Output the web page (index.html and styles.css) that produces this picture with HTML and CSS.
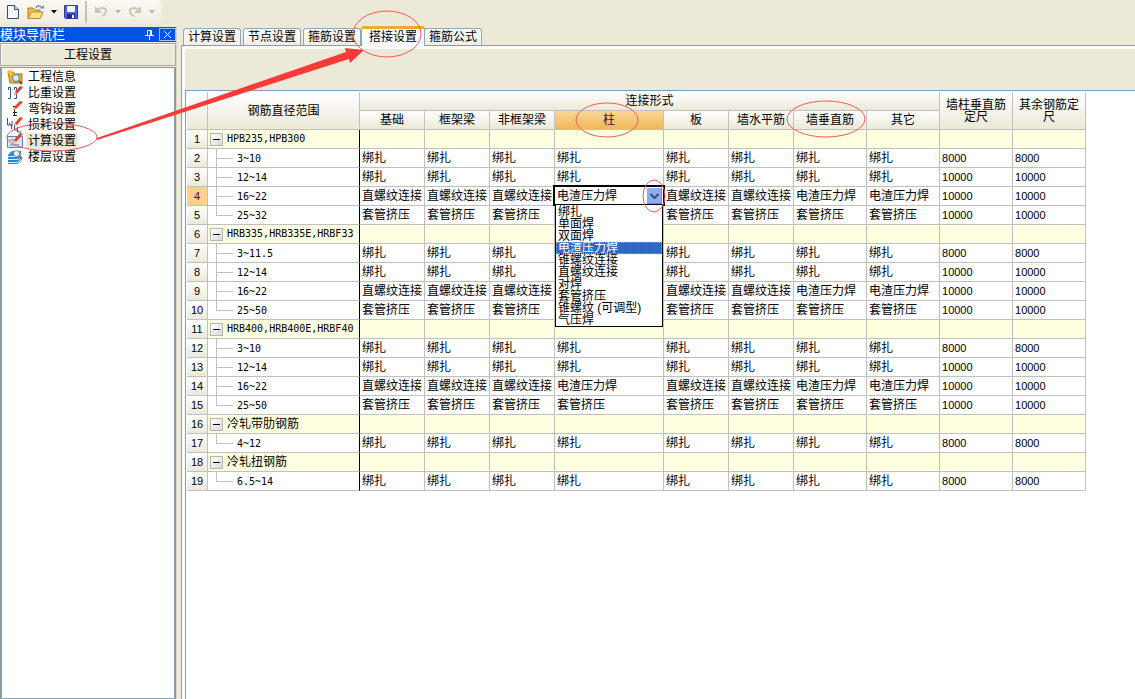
FILE: index.html
```html
<!DOCTYPE html>
<html lang="zh-CN">
<head>
<meta charset="utf-8">
<title>工程设置</title>
<link rel="stylesheet" href="styles.css">
</head>
<body>
<header class="toolbar">
  <div class="tools">
    <button class="tool" aria-label="新建"><svg width="16" height="16" viewBox="0 0 16 16"><path d="M2.500 1.500h7l4 4v9h-11z" fill="#f4f9ff" stroke="#2f4f78"/><path d="M9.500 1.500v4h4" fill="#c5d8ef" stroke="#2f4f78"/></svg></button>
    <button class="tool" aria-label="打开"><svg width="18" height="16" viewBox="0 0 18 16"><path d="M1 14V4h5l1.500 2H13v8z" fill="#f0c04a" stroke="#a67a1c"/><path d="M1 14.500 4.500 8H16l-3 6.500z" fill="#ffe08a" stroke="#b98a22"/><path d="M9 4c1-3 4-3 6 0" fill="none" stroke="#6b8fb8" stroke-width="1.500"/><path d="M13 4.500h4V1z" fill="#6b8fb8"/></svg></button>
    <button class="tool caret" aria-label="打开选项"><svg width="6" height="4"><path d="M0 0h6L3 3.500z"/></svg></button>
    <button class="tool" aria-label="保存"><svg width="16" height="16" viewBox="0 0 16 16"><path d="M1.500 1.500h13v13h-12l-1-1z" fill="#4a62d8" stroke="#2c3ca0"/><path d="M4 2h8v6H4z" fill="#eef3ff"/><path d="M4 10h8v4H4z" fill="#20307c"/><path d="M9 11h2v3H9z" fill="#fff"/></svg></button>
    <span class="divider"></span>
    <button class="tool" aria-label="撤销" disabled><svg width="16" height="16" viewBox="0 0 16 16"><path d="M4 7c2-4 9-4 9 0 0 3-2 4-4 5" fill="none" stroke="#c8c5ba" stroke-width="2"/><path d="M2 2v7h7z" fill="#c8c5ba"/></svg></button>
    <button class="tool caret" aria-label="撤销选项" disabled><svg width="6" height="4"><path d="M0 0h6L3 3.500z" fill="#b8b5a8"/></svg></button>
    <button class="tool" aria-label="重做" disabled><svg width="16" height="16" viewBox="0 0 16 16"><path d="M12 7C10 3 3 3 3 7c0 3 2 4 4 5" fill="none" stroke="#c8c5ba" stroke-width="2"/><path d="M14 2v7H7z" fill="#c8c5ba"/></svg></button>
    <button class="tool caret" aria-label="重做选项" disabled><svg width="6" height="4"><path d="M0 0h6L3 3.500z" fill="#b8b5a8"/></svg></button>
  </div>
</header>
<div class="workspace">
  <aside class="sidebar">
    <div class="side-title"><span>模块导航栏</span>
      <button class="pin" aria-label="固定"><svg width="9" height="11" viewBox="0 0 9 11"><path d="M2.500 1.500h4v5h-4zM5.500 1v6M0 6.500h9M4.500 7v4" fill="none" stroke="#fff"/></svg></button>
      <button class="close" aria-label="关闭"><svg width="9" height="9" viewBox="0 0 9 9"><path d="m1 1 7 7M8 1 1 8" stroke="#fff"/></svg></button>
    </div>
    <button class="side-group">工程设置</button>
    <nav class="side-list">
      <a class="side-item" href="#"><svg width="16" height="16" viewBox="0 0 16 16"><path d="M1 3h5l2 2h7v9H3z" fill="#e5b646" stroke="#9a7421"/><path d="M3 0v6M0 3h6M1 1l4 4M5 1 1 5" stroke="#ffc928"/><circle cx="9" cy="9" r="3.500" fill="#dceefb" stroke="#5d7184"/><path d="m12 12 3 3" stroke="#7e551a" stroke-width="2"/></svg><span>工程信息</span></a>
      <a class="side-item" href="#"><svg width="16" height="16" viewBox="0 0 16 16"><path d="M1 2.500h2.500v11H1M7 2.500h2.500v11H7M1.500 2v3M7.500 2v3" fill="none" stroke="#36568c"/><path d="m7 10 1-3 5-6 3 1-6 7z" fill="#e8402c"/><path d="m7 10 1-3 2 2z" fill="#f7c99b"/></svg><span>比重设置</span></a>
      <a class="side-item" href="#"><svg width="16" height="16" viewBox="0 0 16 16"><path d="M6 5.500h3M7.500 5v10M6 11.500h4M6 14.500h4" stroke="#222" fill="none"/><path d="m6 9 1-3 6-6 3 1-7 7z" fill="#e8402c"/><path d="m6 9 1-3 2 2z" fill="#f7c99b"/></svg><span>弯钩设置</span></a>
      <a class="side-item" href="#"><svg width="16" height="16" viewBox="0 0 16 16"><path d="M.500 1v7h4v4M7.500 7v6h3M10.500 10v5h4M2 6l3 3V4" fill="none" stroke="#36568c"/><path d="m7 9 1-3 5-6 3 1-6 7z" fill="#e8402c"/><path d="m7 9 1-3 2 2z" fill="#f7c99b"/></svg><span>损耗设置</span></a>
      <a class="side-item selected" href="#"><svg width="16" height="16" viewBox="0 0 16 16"><path d="M.500 3.500h15v11H.500z" fill="#d6e6fa" stroke="#5b82bf"/><path d="M3 7h4M3 12h9" stroke="#5b82bf"/><path d="m6 10 1-3 6-7 3 1-7 8z" fill="#e8402c"/><path d="m6 10 1-3 2 2z" fill="#f7c99b"/></svg><span>计算设置</span></a>
      <a class="side-item" href="#"><svg width="16" height="16" viewBox="0 0 16 16"><path d="m1 6 4-4h9v10l-4 3H1z" fill="#2b86cf"/><path d="M1 7.500h10l3-2M1 10.500h10l3-2M1 13.500h9l4-3" fill="none" stroke="#d5efff"/><circle cx="9.500" cy="4.500" r="3" fill="#e4f3fd" stroke="#71879a"/><path d="m12 7 3 3" stroke="#8b6225" stroke-width="2"/></svg><span>楼层设置</span></a>
    </nav>
  </aside>
  <main class="content">
    <div class="tabs" role="tablist">
      <button class="tab" role="tab">计算设置</button>
      <button class="tab" role="tab">节点设置</button>
      <button class="tab" role="tab">箍筋设置</button>
      <button class="tab active" role="tab" aria-selected="true">搭接设置</button>
      <button class="tab" role="tab">箍筋公式</button>
    </div>
    <section class="panel">
      <div class="band"></div>
      <div class="sheet">
        <table class="grid">
          <colgroup><col class="c-num"><col class="c-name"><col class="c-std"><col class="c-std"><col class="c-std"><col class="c-col"><col class="c-std"><col class="c-std"><col class="c-wide"><col class="c-wide"><col class="c-wide"><col class="c-wide"></colgroup>
          <thead>
            <tr><th rowspan="2"></th><th rowspan="2">钢筋直径范围</th><th colspan="8">连接形式</th><th rowspan="2" class="wrap">墙柱垂直筋定尺</th><th rowspan="2" class="wrap">其余钢筋定尺</th></tr>
            <tr><th>基础</th><th>框架梁</th><th>非框架梁</th><th class="current">柱</th><th>板</th><th>墙水平筋</th><th>墙垂直筋</th><th>其它</th></tr>
          </thead>
          <tbody>
            <tr class="group"><th>1</th><td><button class="fold" aria-label="折叠"></button>HPB235,HPB300</td><td></td><td></td><td></td><td></td><td></td><td></td><td></td><td></td><td></td><td></td></tr>
            <tr><th>2</th><td class="leaf">3~10</td><td>绑扎</td><td>绑扎</td><td>绑扎</td><td>绑扎</td><td>绑扎</td><td>绑扎</td><td>绑扎</td><td>绑扎</td><td>8000</td><td>8000</td></tr>
            <tr><th>3</th><td class="leaf">12~14</td><td>绑扎</td><td>绑扎</td><td>绑扎</td><td>绑扎</td><td>绑扎</td><td>绑扎</td><td>绑扎</td><td>绑扎</td><td>10000</td><td>10000</td></tr>
            <tr><th class="current">4</th><td class="leaf">16~22</td><td>直螺纹连接</td><td>直螺纹连接</td><td>直螺纹连接</td><td class="editing">
              <div class="combo">
                <select class="combo-value" aria-label="柱连接形式"><option>电渣压力焊</option></select>
                <svg class="combo-arrow" width="15" height="16" viewBox="0 0 15 16"><rect width="15" height="16" fill="#8eaaf0"/><path d="M0 15.500h15M14.500 0v16" stroke="#6b88dc"/><path d="m3.500 6 4 4 4-4" fill="none" stroke="#3d5079" stroke-width="2"/></svg>
                <ul class="options" role="listbox" aria-label="连接形式">
                  <li role="option">绑扎</li><li role="option">单面焊</li><li role="option">双面焊</li><li role="option" class="chosen" aria-selected="true">电渣压力焊</li><li role="option">锥螺纹连接</li><li role="option">直螺纹连接</li><li role="option">对焊</li><li role="option">套管挤压</li><li role="option">锥螺纹 (可调型)</li><li role="option">气压焊</li>
                </ul>
              </div></td><td>直螺纹连接</td><td>直螺纹连接</td><td>电渣压力焊</td><td>电渣压力焊</td><td>10000</td><td>10000</td></tr>
            <tr><th>5</th><td class="leaf end">25~32</td><td>套管挤压</td><td>套管挤压</td><td>套管挤压</td><td>套管挤压</td><td>套管挤压</td><td>套管挤压</td><td>套管挤压</td><td>套管挤压</td><td>10000</td><td>10000</td></tr>
            <tr class="group"><th>6</th><td><button class="fold" aria-label="折叠"></button>HRB335,HRB335E,HRBF33</td><td></td><td></td><td></td><td></td><td></td><td></td><td></td><td></td><td></td><td></td></tr>
            <tr><th>7</th><td class="leaf">3~11.5</td><td>绑扎</td><td>绑扎</td><td>绑扎</td><td>绑扎</td><td>绑扎</td><td>绑扎</td><td>绑扎</td><td>绑扎</td><td>8000</td><td>8000</td></tr>
            <tr><th>8</th><td class="leaf">12~14</td><td>绑扎</td><td>绑扎</td><td>绑扎</td><td>绑扎</td><td>绑扎</td><td>绑扎</td><td>绑扎</td><td>绑扎</td><td>10000</td><td>10000</td></tr>
            <tr><th>9</th><td class="leaf">16~22</td><td>直螺纹连接</td><td>直螺纹连接</td><td>直螺纹连接</td><td>电渣压力焊</td><td>直螺纹连接</td><td>直螺纹连接</td><td>电渣压力焊</td><td>电渣压力焊</td><td>10000</td><td>10000</td></tr>
            <tr><th>10</th><td class="leaf end">25~50</td><td>套管挤压</td><td>套管挤压</td><td>套管挤压</td><td>套管挤压</td><td>套管挤压</td><td>套管挤压</td><td>套管挤压</td><td>套管挤压</td><td>10000</td><td>10000</td></tr>
            <tr class="group"><th>11</th><td><button class="fold" aria-label="折叠"></button>HRB400,HRB400E,HRBF40</td><td></td><td></td><td></td><td></td><td></td><td></td><td></td><td></td><td></td><td></td></tr>
            <tr><th>12</th><td class="leaf">3~10</td><td>绑扎</td><td>绑扎</td><td>绑扎</td><td>绑扎</td><td>绑扎</td><td>绑扎</td><td>绑扎</td><td>绑扎</td><td>8000</td><td>8000</td></tr>
            <tr><th>13</th><td class="leaf">12~14</td><td>绑扎</td><td>绑扎</td><td>绑扎</td><td>绑扎</td><td>绑扎</td><td>绑扎</td><td>绑扎</td><td>绑扎</td><td>10000</td><td>10000</td></tr>
            <tr><th>14</th><td class="leaf">16~22</td><td>直螺纹连接</td><td>直螺纹连接</td><td>直螺纹连接</td><td>电渣压力焊</td><td>直螺纹连接</td><td>直螺纹连接</td><td>电渣压力焊</td><td>电渣压力焊</td><td>10000</td><td>10000</td></tr>
            <tr><th>15</th><td class="leaf end">25~50</td><td>套管挤压</td><td>套管挤压</td><td>套管挤压</td><td>套管挤压</td><td>套管挤压</td><td>套管挤压</td><td>套管挤压</td><td>套管挤压</td><td>10000</td><td>10000</td></tr>
            <tr class="group"><th>16</th><td><button class="fold" aria-label="折叠"></button>冷轧带肋钢筋</td><td></td><td></td><td></td><td></td><td></td><td></td><td></td><td></td><td></td><td></td></tr>
            <tr><th>17</th><td class="leaf end">4~12</td><td>绑扎</td><td>绑扎</td><td>绑扎</td><td>绑扎</td><td>绑扎</td><td>绑扎</td><td>绑扎</td><td>绑扎</td><td>8000</td><td>8000</td></tr>
            <tr class="group"><th>18</th><td><button class="fold" aria-label="折叠"></button>冷轧扭钢筋</td><td></td><td></td><td></td><td></td><td></td><td></td><td></td><td></td><td></td><td></td></tr>
            <tr><th>19</th><td class="leaf end">6.5~14</td><td>绑扎</td><td>绑扎</td><td>绑扎</td><td>绑扎</td><td>绑扎</td><td>绑扎</td><td>绑扎</td><td>绑扎</td><td>8000</td><td>8000</td></tr>
          </tbody>
        </table>
      </div>
    </section>
  </main>
</div>
<svg class="marks" width="900" height="240" viewBox="0 0 900 240" aria-hidden="true">
  <path d="M97 138 346 52l-1-4 19 2-14 13-1-4L97 140z" fill="#fb3a38"/>
  <g fill="none" stroke="#f4595a"><ellipse cx="52" cy="137" rx="45" ry="14"/><ellipse cx="387" cy="34" rx="34" ry="23"/><ellipse cx="607" cy="120" rx="31" ry="17"/><ellipse cx="654" cy="196" rx="11" ry="16"/><ellipse cx="826" cy="119" rx="39" ry="18"/></g>
</svg>
</body>
</html>
```
FILE: styles.css
```css
* { box-sizing: border-box; }

body {
  margin: 0;
  min-height: 100vh;
  display: flex;
  flex-direction: column;
  position: relative;
  background: #ece9d8;
  color: #000;
  font: 12px/16px "Liberation Sans", "Noto Sans CJK SC", sans-serif;
}

button, select { font: inherit; color: inherit; margin: 0; padding: 0; border: 0; background: none; }
svg { display: block; }

/* toolbar */
.toolbar { display: flex; height: 26px; }
.tools {
  display: flex;
  align-items: center;
  height: 24px;
  padding-left: 5px;
  background: linear-gradient(#faf9f5, #efede0);
  border-radius: 0 4px 4px 0;
}
.tool { width: 16px; display: flex; justify-content: center; }
.tool:nth-child(2) { width: 18px; margin-left: 6px; }
.tool.caret { width: 18px; }
.divider { width: 2px; height: 22px; margin: 0 6px; background: #c5c2b2; }

/* sidebar */
.workspace { flex: 1; display: flex; }
.sidebar { width: 177px; padding-top: 1px; display: flex; flex-direction: column; border-right: 1px solid #d8d4c2; }
.side-title {
  height: 15px;
  display: flex;
  align-items: center;
  gap: 5px;
  background: #0054e3;
  color: #fff;
  font-size: 13px;
}
.side-title span { flex: 1; }
.close {
  width: 17px;
  height: 13px;
  display: grid;
  place-items: center;
  border: 1px solid #9ebcf5;
}
.side-group {
  height: 23px;
  margin: 1px 0;
  border: 1px solid #aca899;
  box-shadow: inset 1px 1px #fff;
}
.side-list { flex: 1; padding: 1px 0; background: #fff; border: 1px solid #7f9db9; border-left: 2px solid #8b9ba8; border-right-width: 2px; }
.side-item { display: flex; gap: 3px; padding-left: 5px; color: inherit; text-decoration: none; }
.side-item span { padding: 0 2px; height: 16px; }
.side-item.selected span { background: #ece9d8; }

/* tabs */
.content { flex: 1; min-width: 0; display: flex; flex-direction: column; padding-left: 4px; }
.tabs { display: flex; align-items: flex-end; gap: 2px; height: 19px; padding-left: 2px; }
.tab {
  height: 17px;
  padding: 0 4px;
  border: 1px solid #91a7b4;
  border-bottom: 0;
  border-radius: 3px 3px 0 0;
  background: linear-gradient(#fff, #efeee6);
}
.tab.active {
  position: relative;
  height: 20px;
  padding: 0 7px 1px;
  margin: 0 -3px -1px -2px;
  border-top: 3px solid #f5a92c;
  background: #fcfcfe;
  line-height: 14px;
}

/* panel and grid */
.panel {
  flex: 1;
  display: flex;
  flex-direction: column;
  padding: 3px 0 0 3px;
  border-top: 1px solid #919b9c;
  border-left: 1px solid #919b9c;
  background: #fcfcfe;
}
.band { height: 41px; background: #ece9d8; }
.sheet { flex: 1; padding: 1px 0 0 1px; background: #fff; border-top: 1px solid #7f9db9; border-left: 1px solid #7f9db9; }
.grid { width: 899px; table-layout: fixed; border-collapse: separate; border-spacing: 0; }
.c-num { width: 21px; }
.c-name { width: 152px; }
.c-std { width: 65px; }
.c-col { width: 109px; }
.c-wide { width: 73px; }
.grid th, .grid td {
  height: 19px;
  padding: 0 0 0 2px;
  border-right: 1px solid #c0c0c0;
  border-bottom: 1px solid #c0c0c0;
  text-align: left;
  font-weight: normal;
  line-height: 16px;
  white-space: nowrap;
}
.grid td:nth-child(n+11) { font-size: 11px; }
.grid th { padding: 0; text-align: center; background: linear-gradient(#fff, #ece9d8); }
.grid tbody th { font-size: 11px; }
.grid thead .wrap { padding: 0 5px; white-space: normal; line-height: 12px; }
.grid thead .current { background: linear-gradient(#f9d79a, #f0b855); color: #5a0050; }
.grid tbody .current { background: #ffd08a; color: #5a0050; }
.grid td:nth-child(2) { border-right-color: #000; }
.grid .group td { background: #ffffe1; }
.grid .group td:nth-child(2), .grid .leaf { font-family: "DejaVu Sans Mono", "Noto Sans CJK SC", monospace; font-size: 10px; }
.grid .group:nth-child(n+16) td:nth-child(2) { font-size: 12px; }
.fold {
  width: 13px;
  height: 13px;
  margin-right: 4px;
  border: 1px solid #b5b5b5;
  background: linear-gradient(#000, #000) center / 7px 1px no-repeat, linear-gradient(135deg, #fff, #d8d8d8);
  vertical-align: middle;
}
.grid .leaf {
  padding: 1px 0 0 29px;
  background:
    linear-gradient(#c0c0c0, #c0c0c0) 8px 0 / 1px 100% no-repeat,
    linear-gradient(#c0c0c0, #c0c0c0) 9px 9px / 16px 1px no-repeat;
}
.grid .leaf.end { background-size: 1px 10px, 16px 1px; }

/* open drop-down over the grid */
.grid .editing { padding: 0; position: relative; }
.combo { position: absolute; z-index: 1; inset: -2px -2px -1px -2px; padding-right: 1px; border: 2px solid #000; background: #fff; display: flex; align-items: center; }
.combo-value { appearance: none; flex: 1; min-width: 0; height: 16px; padding-left: 2px; line-height: 16px; }
.options {
  position: absolute;
  top: 100%;
  left: 0;
  right: 0;
  margin: 0;
  padding: 1px 0 0;
  border: 1px solid #000;
  background: #fff;
  list-style: none;
}
.options li { height: 12px; padding-left: 2px; line-height: 12px; }
.options .chosen { background: #316ac5; color: #fff; outline: 1px dotted #d9923a; outline-offset: -1px; }

/* red annotations drawn over the window */
.marks { position: absolute; top: 0; left: 0; z-index: 2; pointer-events: none; }
```
